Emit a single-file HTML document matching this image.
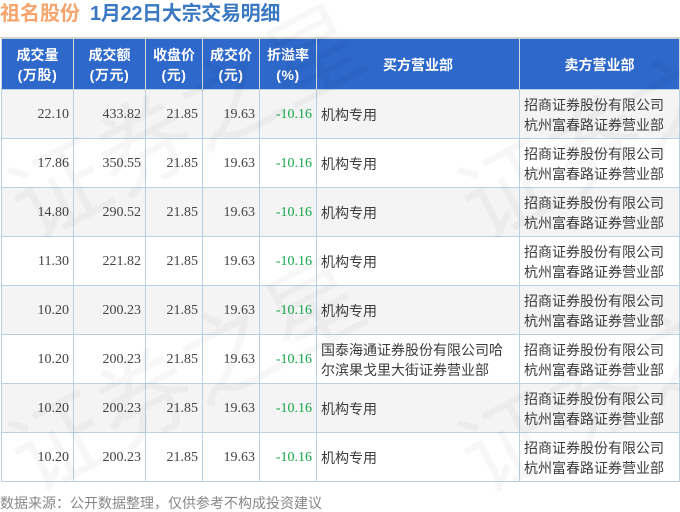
<!DOCTYPE html>
<html><head><meta charset="utf-8"><style>
html,body{margin:0;padding:0;width:680px;height:512px;overflow:hidden;background:#fff}
body{position:relative;font-family:"Liberation Sans","WenQuanYi Zen Hei","Noto Sans CJK SC",sans-serif}
.t{position:absolute;top:0;font-size:20px;font-weight:bold;line-height:28px;white-space:nowrap}
.bar{position:absolute;left:0;top:37px;width:680px;height:1px;background:#d4d4d4}
table{position:absolute;left:1px;top:38px;border-collapse:collapse;table-layout:fixed;width:679px}
th{box-sizing:border-box;background:#2d68ca;color:#fff;font-size:14px;font-weight:bold;line-height:20px;height:51px;padding:2px 0 0;border:1px solid #d0d0d0;border-bottom-color:#b9d0e6;border-left-color:#d0d8e0;border-right-color:#d0d8e0;text-align:center}
th span{letter-spacing:.6px}
td{box-sizing:border-box;height:49px;padding:2px 0 0;border:1px solid #b9d0e6;font-size:14px;color:#444;line-height:20px}
tr:nth-child(odd) td{background:#f4f4f4}
td.n{font-family:"Liberation Serif",serif;text-align:right;padding:2px 4px 0 0;position:relative;top:0}
td.n{padding-top:1px}
td.g{color:#16a64a}
td.c{padding-left:4px;color:#3c3c3c}
.f{position:absolute;left:0;top:493px;font-size:14px;line-height:20px;color:#888;white-space:nowrap}
svg{position:absolute;left:0;top:0;pointer-events:none}
</style></head><body>
<div class="t" style="left:0;color:#f6a56c">祖名股份</div>
<div class="t" style="left:90px;color:#3a78c2;letter-spacing:-.3px">1月22日大宗交易明细</div>
<div class="bar"></div>
<table><colgroup><col style="width:72px"><col style="width:72px"><col style="width:57px"><col style="width:57px"><col style="width:57px"><col style="width:203px"><col style="width:160px"></colgroup>
<thead><tr><th>成交量<br><span>(万股)</span></th><th>成交额<br><span>(万元)</span></th><th>收盘价<br><span>(元)</span></th><th>成交价<br><span>(元)</span></th><th>折溢率<br><span>(%)</span></th><th>买方营业部</th><th>卖方营业部</th></tr></thead>
<tbody>
<tr><td class="n">22.10</td><td class="n">433.82</td><td class="n">21.85</td><td class="n">19.63</td><td class="n g">-10.16</td><td class="c">机构专用</td><td class="c">招商证券股份有限公司<br>杭州富春路证券营业部</td></tr>
<tr><td class="n">17.86</td><td class="n">350.55</td><td class="n">21.85</td><td class="n">19.63</td><td class="n g">-10.16</td><td class="c">机构专用</td><td class="c">招商证券股份有限公司<br>杭州富春路证券营业部</td></tr>
<tr><td class="n">14.80</td><td class="n">290.52</td><td class="n">21.85</td><td class="n">19.63</td><td class="n g">-10.16</td><td class="c">机构专用</td><td class="c">招商证券股份有限公司<br>杭州富春路证券营业部</td></tr>
<tr><td class="n">11.30</td><td class="n">221.82</td><td class="n">21.85</td><td class="n">19.63</td><td class="n g">-10.16</td><td class="c">机构专用</td><td class="c">招商证券股份有限公司<br>杭州富春路证券营业部</td></tr>
<tr><td class="n">10.20</td><td class="n">200.23</td><td class="n">21.85</td><td class="n">19.63</td><td class="n g">-10.16</td><td class="c">机构专用</td><td class="c">招商证券股份有限公司<br>杭州富春路证券营业部</td></tr>
<tr><td class="n">10.20</td><td class="n">200.23</td><td class="n">21.85</td><td class="n">19.63</td><td class="n g">-10.16</td><td class="c">国泰海通证券股份有限公司哈<br>尔滨果戈里大街证券营业部</td><td class="c">招商证券股份有限公司<br>杭州富春路证券营业部</td></tr>
<tr><td class="n">10.20</td><td class="n">200.23</td><td class="n">21.85</td><td class="n">19.63</td><td class="n g">-10.16</td><td class="c">机构专用</td><td class="c">招商证券股份有限公司<br>杭州富春路证券营业部</td></tr>
<tr><td class="n">10.20</td><td class="n">200.23</td><td class="n">21.85</td><td class="n">19.63</td><td class="n g">-10.16</td><td class="c">机构专用</td><td class="c">招商证券股份有限公司<br>杭州富春路证券营业部</td></tr>
</tbody></table>
<svg width="680" height="512" font-family="'Noto Sans CJK SC','WenQuanYi Zen Hei',sans-serif" font-size="96" fill="#000" fill-opacity="0.03">
<text transform="translate(33,243) rotate(-28)">证券之星</text>
<text transform="translate(33,496) rotate(-28)">证券之星</text>
<text transform="translate(483,243) rotate(-28)">证券之星</text>
<text transform="translate(483,496) rotate(-28)">证券之星</text>
</svg>
<div class="f">数据来源：公开数据整理，仅供参考不构成投资建议</div>
</body></html>
